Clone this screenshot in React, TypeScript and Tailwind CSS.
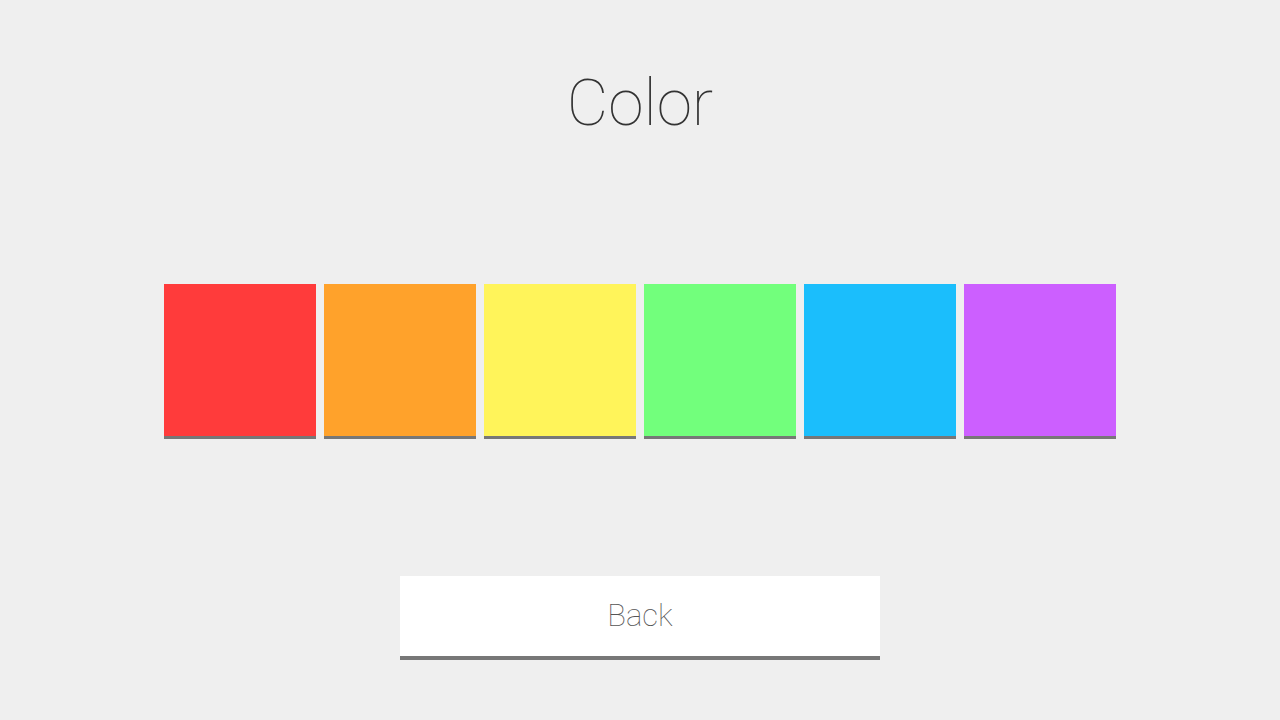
const swatches = [
  "bg-[#ff3b3b]",
  "bg-[#ffa22b]",
  "bg-[#fff45a]",
  "bg-[#72ff7c]",
  "bg-[#1bbefc]",
  "bg-[#cc5fff]",
];

export default function App() {
  return (
    <div
      className="min-h-screen w-full bg-[#efefef] flex flex-col items-center"
      style={{ fontFamily: "Roboto, 'Noto Sans', sans-serif" }}
    >
      <h1 className="mt-[72px] text-[64px] leading-none font-thin text-[#333333]">
        Color
      </h1>

      <div className="mt-[148px] flex gap-2">
        {swatches.map((c) => (
          <button
            key={c}
            className={`w-[152px] h-[155px] border-b-[3px] border-[#777777] ${c}`}
          />
        ))}
      </div>

      <button className="mt-[137px] w-[480px] h-[84px] bg-white border-b-4 border-[#777777] flex items-center justify-center text-[31px] font-thin text-[#555555]">
        Back
      </button>
    </div>
  );
}
